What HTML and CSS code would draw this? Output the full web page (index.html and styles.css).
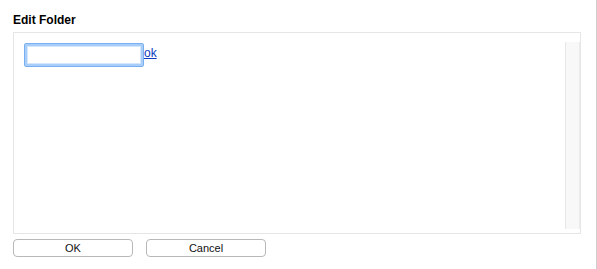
FILE: index.html
```html
<!DOCTYPE html>
<html>
<head>
<meta charset="utf-8">
<link rel="stylesheet" href="styles.css">
</head>
<body>
<div class="page">
  <h1 class="title">Edit Folder</h1>
  <div class="panel">
    <div class="panel-body">
      <div class="row">
        <input class="name-input" type="text" value="">
        <a class="ok-link" href="#">ok</a>
      </div>
    </div>
    <div class="scrollbar"></div>
  </div>
  <div class="actions">
    <button class="btn">OK</button>
    <button class="btn">Cancel</button>
  </div>
</div>
</body>
</html>
```
FILE: styles.css
```css
html, body {
  margin: 0;
  padding: 0;
  background: #ffffff;
}
body {
  font-family: "Liberation Sans", Arial, sans-serif;
  color: #000;
  width: 597px;
  height: 269px;
  box-sizing: border-box;
  border-right: 1px solid #cfcfcf;
}
.page {
  padding: 13px 0 0 13px;
}
.title {
  margin: 0 0 5px 0;
  font-size: 12px;
  line-height: 14px;
  font-weight: bold;
}
.panel {
  display: flex;
  width: 568px;
  height: 202px;
  box-sizing: border-box;
  border: 1px solid #e6e6e6;
}
.panel-body {
  flex: 1;
  padding: 10px 0 0 10px;
}
.row {
  display: flex;
  align-items: flex-start;
}
.name-input {
  width: 120px;
  height: 24px;
  box-sizing: border-box;
  margin: 0;
  padding: 0 3px;
  border: 1px solid #78aef2;
  border-radius: 2px;
  box-shadow: 0 0 0 2px #a8cdf8 inset, 0 0 0 3px #d3e6fc inset;
  outline: none;
  font-family: inherit;
  font-size: 12px;
  background: #fff;
}
.ok-link {
  color: #0b3bbf;
  text-decoration: underline;
  font-size: 12px;
  line-height: 14px;
  margin-top: 3px;
}
.scrollbar {
  width: 15px;
  margin: 9px 0 4px 0;
  box-sizing: border-box;
  background: #f8f8f8;
  border-left: 1px solid #e7e7e7;
  border-right: 1px solid #ececec;
}
.actions {
  display: flex;
  gap: 13px;
  margin-top: 5px;
}
.btn {
  width: 120px;
  height: 18px;
  margin: 0;
  padding: 0;
  box-sizing: border-box;
  border: 1px solid #b8b8b8;
  border-radius: 4px;
  background: #fff;
  font-family: "Liberation Sans", Arial, sans-serif;
  font-size: 11px;
  line-height: 16px;
  color: #111;
}
```
